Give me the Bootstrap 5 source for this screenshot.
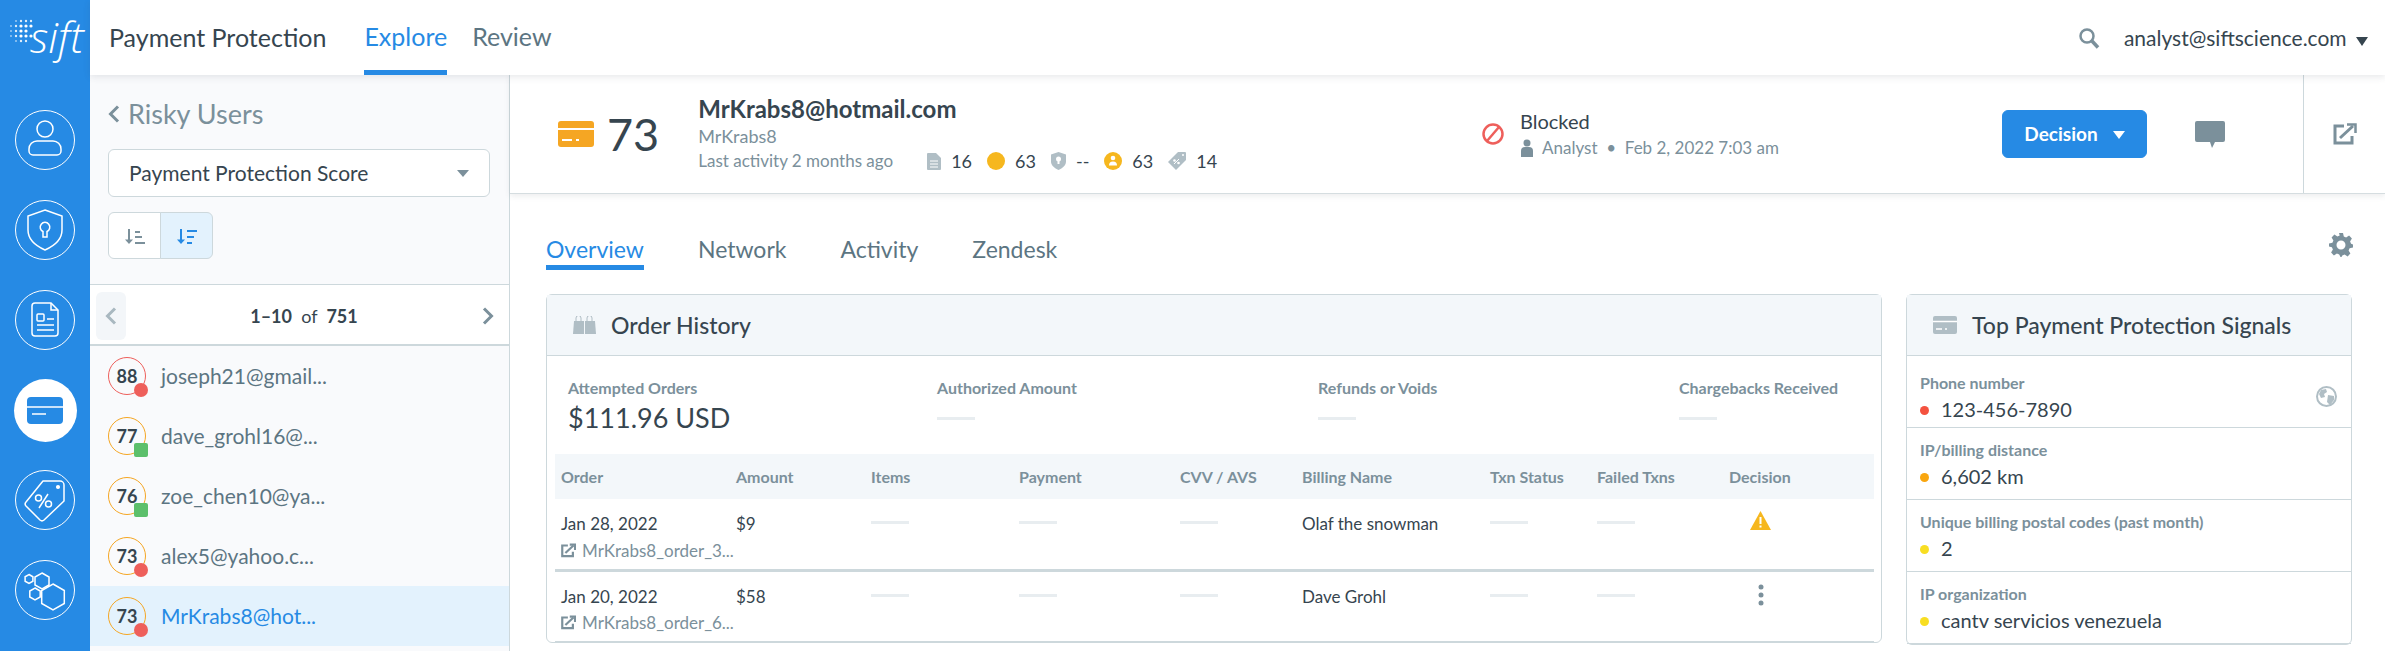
<!DOCTYPE html>
<html lang="en">
<head>
    <meta charset="UTF-8">
    <title>Sift - Payment Protection</title>
    <link href="https://cdn.jsdelivr.net/npm/bootstrap@5.3.0/dist/css/bootstrap.min.css" rel="stylesheet">
    <style>
        html, body { height: 100%; overflow: hidden; }
        body { font-family: "Lato", "Liberation Sans", sans-serif; color: #36454f; background: #fff; }
        .rail { width: 90px; background: #268ae4; flex: none; }
        .rail-logo { height: 74px; padding: 17px 0 0 9px; color: #fff; }
        .rail-logo span { font-family: "Open Sans", sans-serif; font-style: italic; font-weight: 300; font-size: 43px; line-height: 40px; margin-left: -6px; }
        .rail-items { padding-top: 36px; gap: 30px; }
        .rail-item { width: 60px; height: 60px; border-radius: 50%; border: 1.5px solid #fff; }
        .rail-item svg { display: block; margin: -1.5px; }
        .rail-item.is-active { background: #fff; border: 0; width: 63px; height: 63px; margin: -1px -1.5px -2px; }
        .rail-item.is-active svg { margin: 0; }

        .topbar { height: 75px; padding-left: 19px; box-shadow: 0 2px 7px rgba(54, 69, 79, .12); z-index: 3; background: #fff; }
        .topbar-title { font-size: 25px; margin-right: 38px; }
        .topbar-link { font-size: 25px; color: #5c7582; height: 75px; line-height: 72px; margin-right: 25px; text-decoration: none; }
        .topbar-link.is-active { color: #268ae4; border-bottom: 5px solid #268ae4; }
        .topbar-user { font-size: 21px; margin-left: 24px; margin-right: 17px; }
        .caret-down { display: inline-block; border-style: solid; border-width: 9px 6.5px 0; border-color: currentColor transparent transparent; }

        .side { width: 420px; flex: none; background: #f9fafc; border-right: 1px solid #cdd8dc; }
        .side-top { height: 210px; padding: 22px 19px 0 18px; border-bottom: 1px solid #cdd8dc; }
        .side-back { font-size: 27px; line-height: 34px; color: #7b909b; }
        .side-select { height: 48px; margin-top: 18px; padding: 0 20px; background: #fff; border: 1px solid #cdd8dc; border-radius: 6px; font-size: 21px; }
        .side-select .caret-down { color: #7b909b; border-width: 7px 6px 0; }
        .sort-btn { width: 53px; height: 47px; padding: 0; background: #fff; border: 1px solid #cdd8dc; }
        .sort-btn.is-on { background: #e3f2fd; }
        .sort-group { margin-top: 15px; }
        .pager { height: 61px; background: #fff; border-bottom: 2px solid #cdd8dc; padding: 7px 15px 4px 6px; font-size: 18px; }
        .pager-prev { width: 30px; height: 48px; background: #f3f6f9; border-radius: 6px; }
        .pager b { font-weight: 700; }
        .user-row { height: 60px; padding-left: 18px; font-size: 21px; color: #5c7582; }
        .user-row.is-active { background: #e3f2fd; color: #268ae4; }
        .score-ring { width: 38px; height: 38px; margin-right: 15px; border: 1.5px solid #f5a623; border-radius: 50%; font-size: 18px; font-weight: 700; color: #36454f; }
        .score-ring.is-red { border-color: #ee5f5b; }
        .score-flag { position: absolute; right: -3px; bottom: -3px; width: 14px; height: 14px; background: #ee5f5b; border-radius: 50%; border: 0; }
        .score-flag.is-ok { background: #5cbf6b; border-radius: 2px; }

        .head { height: 119px; border-bottom: 1px solid #d5dde0; box-shadow: 0 2px 6px rgba(54, 69, 79, .1); z-index: 2; background: #fff; }
        .head-left { width: 972px; padding-left: 48px; }
        .head-score { font-size: 45px; font-weight: 400; line-height: 1; margin: 0 39px 0 13px; }
        .head-mail { font-size: 24px; font-weight: 700; line-height: 30px; }
        .head-name { font-size: 18px; color: #7b909b; line-height: 24px; }
        .head-meta { font-size: 17px; color: #7b909b; line-height: 26px; }
        .head-stats { font-size: 18px; color: #36454f; margin-left: 34px; }
        .head-stats span { margin: 0 15px 0 10px; }
        .head-state { font-size: 20px; line-height: 28px; }
        .head-by { font-size: 17px; color: #7b909b; line-height: 26px; }
        .btn-decision { width: 145px; height: 48px; padding: 0; background: #268ae4; border-color: #268ae4; font-size: 19px; font-weight: 700; border-radius: 6px; }
        .btn-decision .caret-down { margin-left: 15px; border-width: 8px 6.5px 0; vertical-align: 2px; }
        .head-out { width: 82px; height: 118px; border-left: 1px solid #cdd8dc; margin-left: 78px; }

        .pane { padding: 0 32px 0 36px; }
        .pane-tabs { height: 100px; }
        .pane-tab { font-size: 23px; color: #5c7582; height: 54px; padding: 16px 0 0; margin-right: 54px; text-decoration: none; line-height: 34px; }
        .pane-tab.is-active { color: #268ae4; border-bottom: 5px solid #268ae4; }
        .box { border: 1px solid #cdd8dc; border-radius: 6px; }
        .box-orders { width: 1336px; }
        .box-signals { width: 446px; }
        .box-head { height: 61px; padding: 0 0 0 26px; background: #f3f7fa; border-bottom: 1px solid #cdd8dc; font-size: 23px; font-weight: 500; }
        .box-head svg { margin-right: 15px; }
        .sum-row { padding: 20px 0 0 21px; height: 98px; }
        .sum-cell:nth-child(1) { width: 369px; }
        .sum-cell:nth-child(2) { width: 381px; }
        .sum-cell:nth-child(3) { width: 361px; }
        .sum-label, .th-cell { font-size: 16px; font-weight: 700; color: #7b909b; }
        .sum-value { font-size: 27px; line-height: 36px; }
        .no-data { display: block; width: 38px; height: 3px; background: #e8edf0; }
        .sum-cell .no-data { margin-top: 17px; }
        .order-table { width: 1319px; margin: 0 0 0 8px; table-layout: fixed; font-size: 17px; color: #36454f; }
        .order-table > :not(caption) > * > * { padding: 0 6px; box-shadow: none; background: transparent; border: 0; color: inherit; }
        .order-table thead th { height: 45px; background: #f3f7fa; vertical-align: middle; }
        .order-table tbody td { vertical-align: top; padding-top: 12px; height: 71px; }
        .order-table tbody tr { border-bottom: 1px solid #cdd8dc; }
        .order-table tbody tr.is-thick { border-bottom: 3px solid #cdd8dc; }
        .order-table td .no-data { margin-top: 10px; }
        .order-ref { color: #7b909b; font-size: 17px; white-space: nowrap; margin-top: 1px; }
        .order-ref svg { vertical-align: -1px; margin-right: 6px; }
        .signal { height: 72px; padding: 10px 14px 0 13px; border-bottom: 1px solid #cdd8dc; }
        .signal-label { font-size: 16px; font-weight: 700; color: #7b909b; line-height: 24px; }
        .signal-value { font-size: 20px; line-height: 28px; }
        .signal-dot { display: inline-block; width: 9px; height: 9px; border-radius: 50%; margin-right: 12px; vertical-align: 2px; }
    </style>
</head>
<body>
<div class="d-flex h-100">
    <!-- left rail -->
    <div class="rail d-flex flex-column align-items-center">
        <div class="rail-logo d-flex align-self-stretch align-items-start">
            <svg width="27" height="30" viewBox="0 0 27 30" fill="#fff">
                <g opacity=".55"><circle cx="2" cy="9" r="1"/><circle cx="2" cy="14" r="1"/><circle cx="2" cy="19" r="1"/><circle cx="7" cy="4" r="1"/><circle cx="7" cy="24" r="1"/></g>
                <g opacity=".85"><circle cx="7" cy="9" r="1.2"/><circle cx="7" cy="14" r="1.2"/><circle cx="7" cy="19" r="1.2"/><circle cx="12" cy="4" r="1.2"/><circle cx="12" cy="24" r="1.2"/><circle cx="17" cy="4" r="1.2"/><circle cx="17" cy="24" r="1.2"/><circle cx="22" cy="4" r="1.2"/></g>
                <circle cx="12" cy="9" r="1.6"/><circle cx="12" cy="14" r="1.6"/><circle cx="12" cy="19" r="1.6"/><circle cx="17" cy="9" r="1.6"/><circle cx="17" cy="14" r="1.6"/><circle cx="17" cy="19" r="1.6"/><circle cx="22" cy="9" r="1.6"/><circle cx="22" cy="19" r="1.6"/>
            </svg>
            <span>sift</span>
        </div>
        <div class="rail-items d-flex flex-column align-items-center">
            <div class="rail-item">
                <svg width="60" height="60" fill="none" stroke="#fff" stroke-width="1.5"><circle cx="30" cy="19" r="8"/><path d="M22 31h16a8 8 0 0 1 8 8v2a4 4 0 0 1-4 4H18a4 4 0 0 1-4-4v-2a8 8 0 0 1 8-8z"/></svg>
            </div>
            <div class="rail-item">
                <svg width="60" height="60" fill="none" stroke="#fff" stroke-width="1.5"><path d="M30 10l17 6v14c0 10-8 16-17 20-9-4-17-10-17-20V16z"/><path d="M28 31.500v5.500h4v-5.500a4.800 4.800 0 1 0-4 0z"/></svg>
            </div>
            <div class="rail-item">
                <svg width="60" height="60" fill="none" stroke="#fff" stroke-width="1.5"><path d="M20 13h16l7 7v23a3 3 0 0 1-3 3H20a3 3 0 0 1-3-3V16a3 3 0 0 1 3-3z"/><path d="M36 13v7h7"/><rect x="22" y="24" width="7" height="7" rx="1"/><path d="M32 29h7M22 35h17M22 40h17"/></svg>
            </div>
            <div class="rail-item is-active">
                <svg width="63" height="63" fill="#268ae4"><rect x="13" y="18" width="36" height="27" rx="4"/><path d="M13 28h36M18 35h14" stroke="#fff" stroke-width="1.5"/></svg>
            </div>
            <div class="rail-item">
                <svg width="60" height="60" fill="none" stroke="#fff" stroke-width="1.5" stroke-linejoin="round"><path d="M28 11h17a4 4 0 0 1 4 4v16L29 50a3 3 0 0 1-4 0L11 36a3 3 0 0 1 0-4z"/><circle cx="43" cy="17" r="1.300" fill="#fff"/><circle cx="23.500" cy="28" r="3"/><circle cx="33.500" cy="34" r="3"/><path d="M24 38l9-14"/></svg>
            </div>
            <div class="rail-item">
                <svg width="60" height="60" fill="none" stroke="#fff" stroke-width="1.5"><path d="M38 24l11.300 6.500v13L38 50l-11.300-6.500v-13z"/><path d="M27 13l7 4v8l-7 4-7-4v-8z"/><path d="M14 14.500l3.900 2.250v4.500L14 23.500l-3.900-2.250v-4.500z"/><path d="M20 28l5.200 3v6L20 40l-5.200-3v-6z"/></svg>
            </div>
        </div>
    </div>

    <div class="d-flex flex-column flex-grow-1" style="min-width:0">
        <!-- top bar -->
        <div class="topbar d-flex align-items-center flex-none">
            <div class="topbar-title">Payment Protection</div>
            <a class="topbar-link is-active" href="#">Explore</a>
            <a class="topbar-link" href="#">Review</a>
            <svg class="ms-auto" width="22" height="22" viewBox="0 0 22 22" fill="none" stroke="#7b909b"><circle cx="9" cy="9" r="6.500" stroke-width="2.500"/><path d="M14 14l6 6.500" stroke-width="3.500"/></svg>
            <div class="topbar-user">analyst@siftscience.com <span class="caret-down ms-1"></span></div>
        </div>

        <div class="d-flex flex-grow-1" style="min-height:0">
            <!-- risky users list -->
            <div class="side">
                <div class="side-top">
                    <div class="side-back d-flex align-items-center">
                        <svg width="12" height="18" class="me-2" fill="none" stroke="#7b909b" stroke-width="3"><path d="M10 1.500L2.500 9l7.500 7.500"/></svg>
                        Risky Users
                    </div>
                    <div class="side-select d-flex align-items-center justify-content-between">
                        <span>Payment Protection Score</span><span class="caret-down"></span>
                    </div>
                    <div class="btn-group sort-group d-inline-flex">
                        <button type="button" class="btn sort-btn">
                            <svg width="20" height="16" viewBox="0 0 20 16" fill="none" stroke="#7b909b" stroke-width="2"><path d="M4 0v12"/><path d="M0 10.500h8L4 15z" fill="#7b909b" stroke="none"/><path d="M10 3h5M10 8h7M10 14h10"/></svg>
                        </button>
                        <button type="button" class="btn sort-btn is-on">
                            <svg width="20" height="16" viewBox="0 0 20 16" fill="none" stroke="#268ae4" stroke-width="2"><path d="M4 0v12"/><path d="M0 10.500h8L4 15z" fill="#268ae4" stroke="none"/><path d="M10 2h10M10 8h7M10 14h5"/></svg>
                        </button>
                    </div>
                </div>
                <div class="pager d-flex align-items-center justify-content-between">
                    <div class="pager-prev d-flex align-items-center justify-content-center">
                        <svg width="12" height="18" fill="none" stroke="#a9b8c0" stroke-width="3"><path d="M10 1.500L2.500 9l7.500 7.500"/></svg>
                    </div>
                    <div><b>1–10</b>&nbsp; of &nbsp;<b>751</b></div>
                    <svg width="12" height="18" fill="none" stroke="#7b909b" stroke-width="3"><path d="M2 1.500L9.500 9 2 16.500"/></svg>
                </div>
                <div class="user-row d-flex align-items-center">
                    <div class="score-ring is-red position-relative d-flex align-items-center justify-content-center">88<i class="score-flag"></i></div>joseph21@gmail...
                </div>
                <div class="user-row d-flex align-items-center">
                    <div class="score-ring position-relative d-flex align-items-center justify-content-center">77<i class="score-flag is-ok"></i></div>dave_grohl16@...
                </div>
                <div class="user-row d-flex align-items-center">
                    <div class="score-ring position-relative d-flex align-items-center justify-content-center">76<i class="score-flag is-ok"></i></div>zoe_chen10@ya...
                </div>
                <div class="user-row d-flex align-items-center">
                    <div class="score-ring position-relative d-flex align-items-center justify-content-center">73<i class="score-flag"></i></div>alex5@yahoo.c...
                </div>
                <div class="user-row is-active d-flex align-items-center">
                    <div class="score-ring position-relative d-flex align-items-center justify-content-center">73<i class="score-flag"></i></div>MrKrabs8@hot...
                </div>
            </div>

            <div class="flex-grow-1" style="min-width:0">
                <!-- user header -->
                <div class="head d-flex align-items-center position-relative">
                    <div class="head-left d-flex align-items-center">
                        <svg width="36" height="26" viewBox="0 0 36 26"><rect width="36" height="26" rx="3" fill="#f5a623"/><path d="M0 8h36" stroke="#fff" stroke-width="2"/><path d="M4 19h10M18 19h3" stroke="#fff" stroke-width="2"/></svg>
                        <div class="head-score">73</div>
                        <div>
                            <div class="head-mail">MrKrabs8@hotmail.com</div>
                            <div class="head-name">MrKrabs8</div>
                            <div class="d-flex align-items-center head-meta">
                                Last activity 2 months ago
                                <div class="head-stats d-flex align-items-center">
                                    <svg width="14" height="17" viewBox="0 0 14 17" fill="#b0bec5"><path d="M1 0h8l5 5v11a1 1 0 0 1-1 1H1a1 1 0 0 1-1-1V1a1 1 0 0 1 1-1z"/><path d="M3 8h8M3 11h8M3 14h8" stroke="#fff"/></svg>
                                    <span>16</span>
                                    <svg width="18" height="18"><circle cx="9" cy="9" r="9" fill="#f6b71e"/></svg>
                                    <span>63</span>
                                    <svg width="15" height="18" viewBox="0 0 15 18" fill="#b0bec5"><path d="M7.500 0L15 2.500v7c0 4-3.500 6.800-7.500 8.500C3.500 16.300 0 13.500 0 9.500v-7z"/><circle cx="7.500" cy="7" r="2.500" fill="#fff"/><path d="M6.500 8h2v4h-2z" fill="#fff"/></svg>
                                    <span>--</span>
                                    <svg width="18" height="18"><circle cx="9" cy="9" r="9" fill="#f6b71e"/><circle cx="9" cy="6" r="2.300" fill="#fff"/><path d="M5 13.500a4 4 0 0 1 8 0z" fill="#fff"/></svg>
                                    <span>63</span>
                                    <svg width="18" height="18" viewBox="0 0 18 18" fill="#b0bec5"><path d="M10 0h7a1 1 0 0 1 1 1v7L8 18 0 10z"/><circle cx="15" cy="3" r="1" fill="#fff"/><path d="M6 12l5-5" stroke="#fff"/><circle cx="6.500" cy="8.500" r="1.300" fill="#fff"/><circle cx="10.500" cy="11" r="1.300" fill="#fff"/></svg>
                                    <span>14</span>
                                </div>
                            </div>
                        </div>
                    </div>
                    <svg width="22" height="22" class="me-3" fill="none" stroke="#ee5f5b" stroke-width="2.500"><circle cx="11" cy="11" r="9.500"/><path d="M17 4L5 18"/></svg>
                    <div>
                        <div class="head-state">Blocked</div>
                        <div class="head-by d-flex align-items-center">
                            <svg width="14" height="18" class="me-2" viewBox="0 0 14 18" fill="#7b909b"><circle cx="7" cy="4" r="3.500"/><path d="M1 18v-6a4 4 0 0 1 4-4h4a4 4 0 0 1 4 4v6z"/></svg>
                            Analyst &nbsp;•&nbsp; Feb 2, 2022 7:03 am
                        </div>
                    </div>
                    <div class="ms-auto d-flex align-items-center">
                        <button type="button" class="btn btn-primary btn-decision">Decision<span class="caret-down"></span></button>
                        <svg width="30" height="27" class="ms-5" viewBox="0 0 30 27" fill="#7b909b"><path d="M2 0h26a2 2 0 0 1 2 2v17a2 2 0 0 1-2 2H20l-3 6-2-6H2a2 2 0 0 1-2-2V2a2 2 0 0 1 2-2z"/></svg>
                    </div>
                    <div class="head-out d-flex align-items-center justify-content-center">
                        <svg width="24" height="22" viewBox="0 0 24 22" fill="none" stroke="#7b909b" stroke-width="3"><path d="M11 3H2v17h17v-7"/><path d="M7 15L20 3"/><path d="M14 1.500h8.500V10" stroke-width="2.500"/></svg>
                    </div>
                </div>

                <!-- tab content -->
                <div class="pane">
                    <div class="pane-tabs d-flex align-items-start justify-content-between">
                        <div class="d-flex" style="margin-top:22px">
                            <a class="pane-tab is-active" href="#">Overview</a>
                            <a class="pane-tab" href="#">Network</a>
                            <a class="pane-tab" href="#">Activity</a>
                            <a class="pane-tab" href="#">Zendesk</a>
                        </div>
                        <svg width="24" height="24" viewBox="0 0 24 24" style="margin-top:39px" fill="#7b909b"><path fill-rule="evenodd" d="M10 0h4l.8 3.400 2.300 1 3-1.800 2.800 2.800-1.800 3 1 2.300L24 11.500v3l-3.400.8-1 2.300 1.800 3-2.800 2.800-3-1.800-2.300 1L12.500 24h-1l-1.300-2.400-2.300-1-3 1.800-2.800-2.800 1.800-3-1-2.300L0 13.500v-3l3.400-.8 1-2.300-1.800-3 2.800-2.800 3 1.800 2.300-1zM12 7.500a4.500 4.500 0 1 0 0 9 4.500 4.500 0 0 0 0-9z"/></svg>
                    </div>
                    <div class="d-flex gap-4 align-items-start">
                        <div class="box box-orders">
                            <div class="box-head d-flex align-items-center">
                                <svg width="23" height="18" viewBox="0 0 23 18" fill="#b0bec5"><path d="M1 5h10v13H0z"/><path d="M12 5h10l1 13H12z"/><path d="M3 5V2a2 2 0 0 1 5 0v3M14 5V2a2 2 0 0 1 5 0v3" fill="none" stroke="#b0bec5"/></svg>
                                Order History
                            </div>
                            <div class="sum-row d-flex">
                                <div class="sum-cell"><div class="sum-label">Attempted Orders</div><div class="sum-value">$111.96 USD</div></div>
                                <div class="sum-cell"><div class="sum-label">Authorized Amount</div><i class="no-data"></i></div>
                                <div class="sum-cell"><div class="sum-label">Refunds or Voids</div><i class="no-data"></i></div>
                                <div class="sum-cell"><div class="sum-label">Chargebacks Received</div><i class="no-data"></i></div>
                            </div>
                            <table class="table order-table mb-0">
                                <colgroup><col style="width:175px"><col style="width:135px"><col style="width:148px"><col style="width:161px"><col style="width:122px"><col style="width:188px"><col style="width:107px"><col style="width:132px"><col style="width:151px"></colgroup>
                                <thead>
                                    <tr class="th-cell">
                                        <th class="fw-bold">Order</th><th class="fw-bold">Amount</th><th class="fw-bold">Items</th><th class="fw-bold">Payment</th><th class="fw-bold">CVV / AVS</th><th class="fw-bold">Billing Name</th><th class="fw-bold">Txn Status</th><th class="fw-bold">Failed Txns</th><th class="fw-bold">Decision</th>
                                    </tr>
                                </thead>
                                <tbody>
                                    <tr class="is-thick">
                                        <td>
                                            <div>Jan 28, 2022</div>
                                            <div class="order-ref"><svg width="15" height="15" viewBox="0 0 24 22" fill="none" stroke="#7b909b" stroke-width="3.500"><path d="M11 3H2v17h17v-7"/><path d="M7 15L20 3"/><path d="M14 1.500h8.500V10"/></svg>MrKrabs8_order_3...</div>
                                        </td>
                                        <td>$9</td>
                                        <td><i class="no-data"></i></td><td><i class="no-data"></i></td><td><i class="no-data"></i></td>
                                        <td>Olaf the snowman</td>
                                        <td><i class="no-data"></i></td><td><i class="no-data"></i></td>
                                        <td><svg width="21" height="19" viewBox="0 0 21 19" style="margin-left:21px;display:block"><path d="M10.500 0L21 19H0z" fill="#f6b71e"/><path d="M10.500 6v7M10.500 14.500v2" stroke="#fff" stroke-width="2"/></svg></td>
                                    </tr>
                                    <tr>
                                        <td>
                                            <div>Jan 20, 2022</div>
                                            <div class="order-ref"><svg width="15" height="15" viewBox="0 0 24 22" fill="none" stroke="#7b909b" stroke-width="3.500"><path d="M11 3H2v17h17v-7"/><path d="M7 15L20 3"/><path d="M14 1.500h8.500V10"/></svg>MrKrabs8_order_6...</div>
                                        </td>
                                        <td>$58</td>
                                        <td><i class="no-data"></i></td><td><i class="no-data"></i></td><td><i class="no-data"></i></td>
                                        <td>Dave Grohl</td>
                                        <td><i class="no-data"></i></td><td><i class="no-data"></i></td>
                                        <td><svg width="6" height="22" viewBox="0 0 6 22" style="margin-left:29px;display:block" fill="#7b909b"><circle cx="3" cy="3" r="2.500"/><circle cx="3" cy="11" r="2.500"/><circle cx="3" cy="19" r="2.500"/></svg></td>
                                    </tr>
                                </tbody>
                            </table>
                        </div>
                        <div class="box box-signals">
                            <div class="box-head d-flex align-items-center">
                                <svg width="24" height="18" viewBox="0 0 24 18"><rect width="24" height="18" rx="2" fill="#b0bec5"/><path d="M0 5.500h24M3 13h6M12 13h2" stroke="#fff" stroke-width="1.500"/></svg>
                                Top Payment Protection Signals
                            </div>
                            <div class="signal d-flex justify-content-between align-items-center">
                                <div><div class="signal-label">Phone number</div><div class="signal-value"><i class="signal-dot" style="background:#f4523f"></i>123-456-7890</div></div>
                                <svg width="21" height="21" viewBox="0 0 21 21" fill="#b0bec5"><circle cx="10.500" cy="10.500" r="9.500" fill="none" stroke="#b0bec5" stroke-width="2"/><path d="M5 4l5-1 1 3-3 2 1 3-4 1-2-4zM12 9l6 1 0 4-4 5-3-3z"/></svg>
                            </div>
                            <div class="signal"><div class="signal-label">IP/billing distance</div><div class="signal-value"><i class="signal-dot" style="background:#f9a60f"></i>6,602 km</div></div>
                            <div class="signal"><div class="signal-label">Unique billing postal codes (past month)</div><div class="signal-value"><i class="signal-dot" style="background:#f8de22"></i>2</div></div>
                            <div class="signal"><div class="signal-label">IP organization</div><div class="signal-value"><i class="signal-dot" style="background:#f8de22"></i>cantv servicios venezuela</div></div>
                        </div>
                    </div>
                </div>
            </div>
        </div>
    </div>
</div>
<script src="https://cdn.jsdelivr.net/npm/bootstrap@5.3.0/dist/js/bootstrap.bundle.min.js"></script>
</body>
</html>
